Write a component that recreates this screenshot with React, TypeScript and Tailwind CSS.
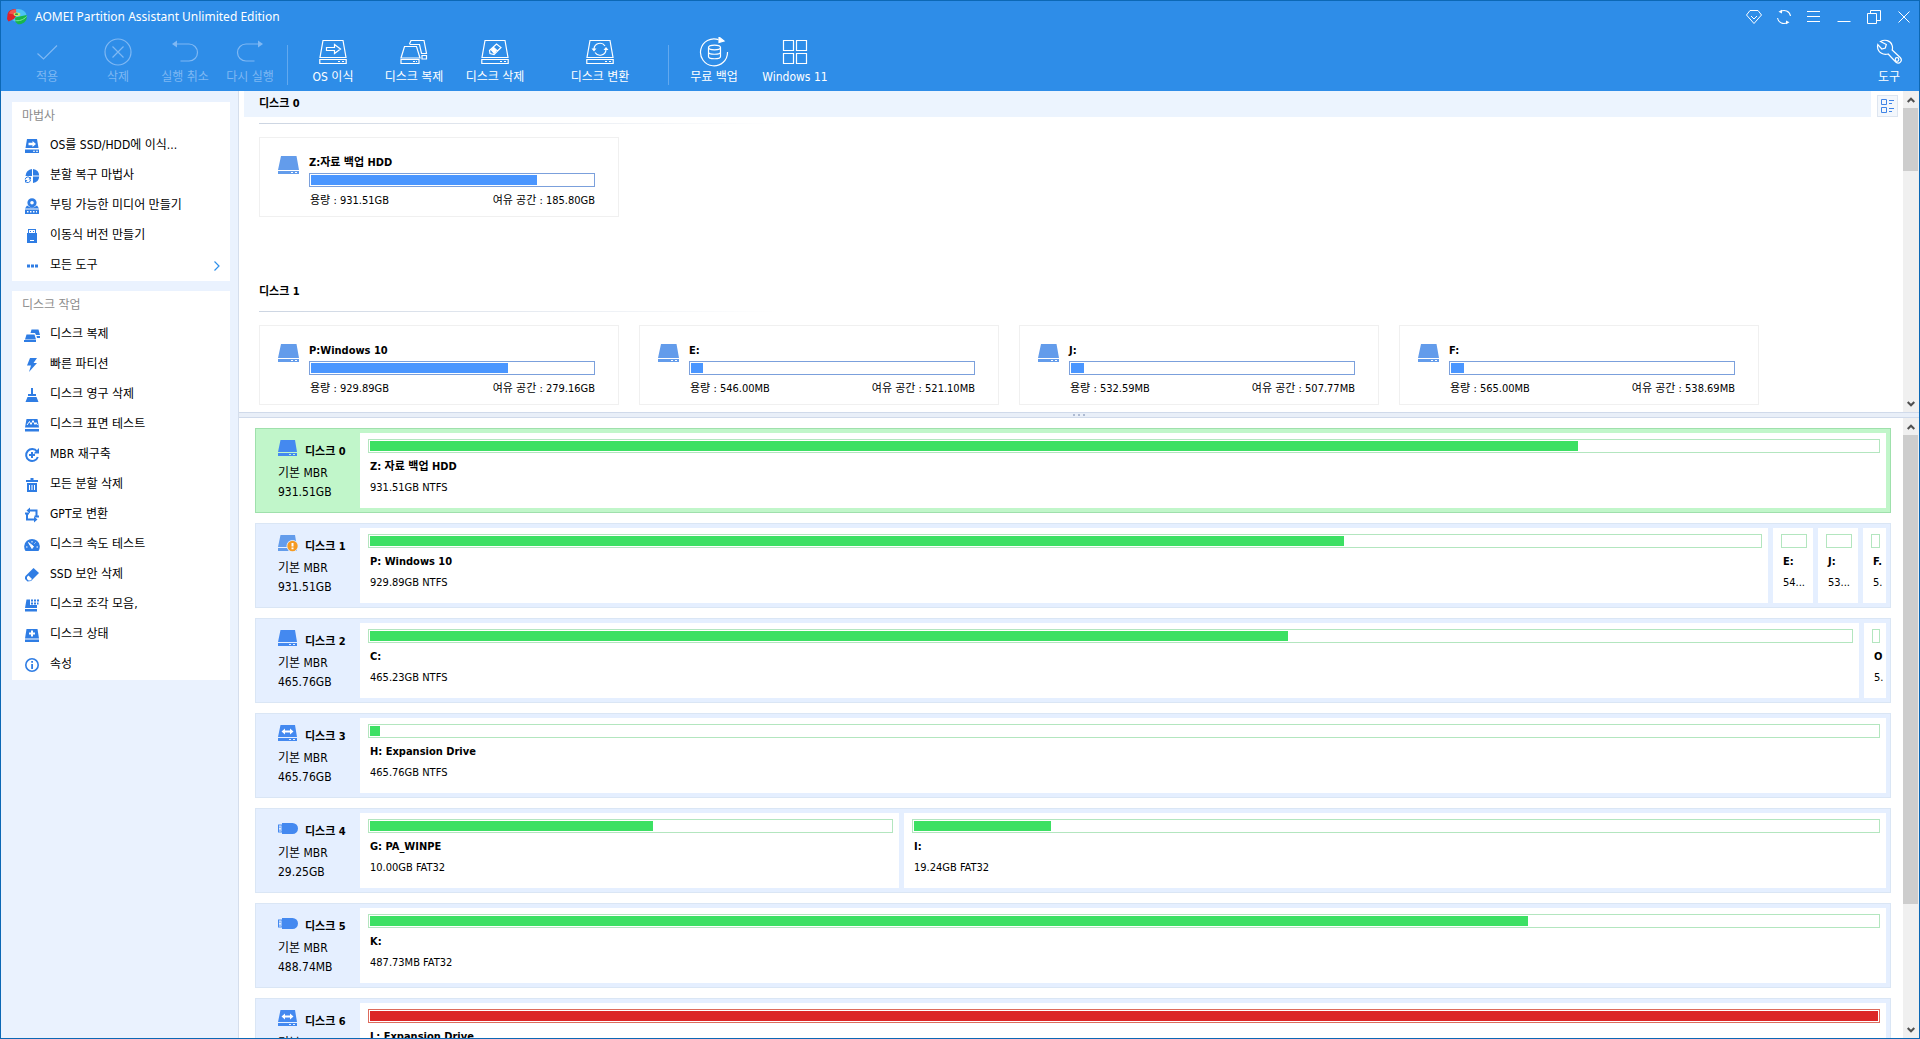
import { ReactNode } from "react"

type Volume = { name: string; capacity: string; free: string; used: number }
type Partition = { name: string; info: string; used: number; size: string; full?: boolean }
type Disk = { id: number; icon: ReactNode; capacity: string; partitions: Partition[]; active?: boolean }

/* ---------- icons ---------- */

const LogoIcon = () => (
    <svg width="20" height="17" viewBox="0 0 20 17">
        <ellipse cx="11" cy="7.500" rx="8.500" ry="6.500" fill="#4cc3f5" />
        <path d="M9 1.200C4 1 1 3 .6 6.200L0 11l1.500 2.500L7 11l2-3Z" fill="#e02228" />
        <path d="M9 1.200C5 1.400 2.500 3 2 5.500L9.500 7Z" fill="#f4574c" />
        <path d="M8 9.500 19.600 7v3.500C19 14 15.500 16.400 11 16.300L8.500 14Z" fill="#18b64c" />
        <path d="M8.500 12.500c3 .8 8-.5 11-4" fill="none" stroke="#7be89a" strokeWidth="1" />
        <ellipse cx="10" cy="6.300" rx="3.400" ry="1.900" fill="#c9e86a" />
        <ellipse cx="9.500" cy="6.200" rx="1.600" ry=".9" fill="#37974a" />
    </svg>
)

const Stroke = ({ children, size = 28 }: { children: ReactNode; size?: number }) => (
    <svg width={size} height="28" viewBox={`0 0 ${size} 28`} fill="none" stroke="currentColor" strokeWidth="1.200">
        {children}
    </svg>
)

const CheckIcon = () => <Stroke><path d="M4.500 15.500l6 5.500L24 7.500" /></Stroke>

const CancelIcon = () => (
    <Stroke>
        <circle cx="14" cy="14" r="13" />
        <path d="M8.500 8.500l11 11M19.500 8.500l-11 11" />
    </Stroke>
)

const UndoIcon = () => (
    <Stroke>
        <path d="M5 6h13a8.500 8.500 0 0 1 0 17H9.500" />
        <path d="M1 6l5-3.500v7Z" fill="currentColor" stroke="none" />
    </Stroke>
)

const RedoIcon = () => (
    <Stroke>
        <path d="M23 6H10a8.500 8.500 0 0 0 0 17h8.500" />
        <path d="M27 6l-5-3.500v7Z" fill="currentColor" stroke="none" />
    </Stroke>
)

const OutlineDisk = ({ children }: { children?: ReactNode }) => (
    <Stroke>
        <path d="M4 2.500h20l3 17H1ZM.8 21.500h26.400v4H.8ZM19 23.500h2M23 23.500h2" />
        {children}
    </Stroke>
)

const MigrateIcon = () => (
    <OutlineDisk>
        <path d="M7.500 9.500h8V6.500l6 4.500-6 4.500v-3h-8Z" />
    </OutlineDisk>
)

const CloneIcon = () => (
    <Stroke>
        <path d="M4.500 8.500h12l3.500 11.500H1ZM1 21.500h18v4H1ZM13 23.500h2M16 23.500h1" />
        <path d="M9.500 6l1.500-3.500h13l2.500 13h-5l-2-9H9.500M22 17.500h4.500v3.500H22Z" />
    </Stroke>
)

const WipeIcon = () => (
    <OutlineDisk>
        <path d="M8.500 12.500l7-6.500 4.500 3.500-7 7-4-1ZM12 9l4.500 4" />
        <path d="M10.500 12l2-2 2.500 3-2 2Z" fill="currentColor" />
    </OutlineDisk>
)

const ConvertIcon = () => (
    <OutlineDisk>
        <path d="M8 11a6 6 0 0 1 11-3M20 11.500a6 6 0 0 1-11 3" />
        <path d="M5.500 10.500h5l-2.500 3ZM17.500 12h5l-2.500-3Z" fill="currentColor" stroke="none" />
    </OutlineDisk>
)

const BackupIcon = () => (
    <svg width="30" height="30" viewBox="0 0 30 30" fill="none" stroke="currentColor" strokeWidth="1.200">
        <path d="M19.500 2.600A13.500 13.500 0 1 0 28.500 15" />
        <path d="M20 0l5 4-5 1.500Z" fill="currentColor" />
        <ellipse cx="15.500" cy="10.500" rx="6" ry="2.300" />
        <path d="M9.500 10.500v9c0 3 12 3 12 0v-9M9.500 15c0 3 12 3 12 0" />
    </svg>
)

const WindowsIcon = () => (
    <Stroke>
        <path d="M2.500 2.500h10v10h-10ZM15.500 2.500h10v10h-10ZM2.500 15.500h10v10h-10ZM15.500 15.500h10v10h-10Z" />
    </Stroke>
)

const WrenchIcon = () => (
    <Stroke>
        <path d="M5.500 3.500C10 1 15.500 2.500 17 7c.8 2 .6 3.500.2 5l8 7.500c3 3.500-1 7.500-4.500 4.500l-7.500-8c-5 1.500-10.500-1.500-10.700-7.500l.3-2 4 4.500 3.500-1 1-3.500Z" />
        <circle cx="22" cy="21.500" r="1.800" />
    </Stroke>
)

const GemIcon = () => (
    <svg width="16" height="14" viewBox="0 0 16 14" fill="none" stroke="currentColor">
        <path d="M4 .5h8L15.500 5 8 13.500.5 5ZM5 6l3 3 3-3" />
    </svg>
)

const SyncIcon = () => (
    <svg width="16" height="16" viewBox="0 0 16 16" fill="none" stroke="currentColor" strokeWidth="1.100">
        <path d="M4.500 2.500C8.500.3 13.500 2 14.500 7M11.500 13.500C7.500 15.700 2.500 14 1.500 9" />
        <path d="M2.500 2.800 6 .8v3.800ZM13.500 13.200 10 15.200v-3.800Z" fill="currentColor" stroke="none" />
    </svg>
)

const MenuIcon = () => (
    <svg width="14" height="12" viewBox="0 0 14 12" stroke="currentColor">
        <path d="M0 .5h13M0 5.500h13M0 10.500h13" />
    </svg>
)

const MinimizeIcon = () => (
    <svg width="14" height="12" viewBox="0 0 14 12" stroke="currentColor">
        <path d="M.5 10.500h13" />
    </svg>
)

const RestoreIcon = () => (
    <svg width="14" height="14" viewBox="0 0 14 14" fill="none" stroke="currentColor">
        <path d="M.5 3.500h9v10h-9ZM3.500 3V.5h10v10H10" />
    </svg>
)

const CloseIcon = () => (
    <svg width="12" height="12" viewBox="0 0 12 12" stroke="currentColor">
        <path d="M.5.5l11 11M11.500.5l-11 11" />
    </svg>
)

const Solid = ({ children }: { children: ReactNode }) => (
    <svg width="16" height="16" viewBox="0 0 16 16" fill="#2f7de4">{children}</svg>
)

const solidDisk = "M3 1h10l1.500 9h-13ZM1 11.500h14V15H1ZM9 12.700v1h2v-1ZM12 12.700v1h2v-1Z"

const wizards = [
    {
        label: "OS를 SSD/HDD에 이식...",
        icon: <Solid><path fillRule="evenodd" d={solidDisk} /><path d="M4.500 4.800h4V3l3.500 3-3.500 3V7.200h-4Z" fill="#fff" /></Solid>,
    },
    {
        label: "분할 복구 마법사",
        icon: (
            <Solid>
                <path d="M8 1v7H1.500A7 7 0 0 1 8 1ZM9 1a7 7 0 0 1 6.200 6.500H9ZM15.200 8.500A7 7 0 0 1 9 15V8.500Z" />
                <path d="M1.200 11.500a2.800 2.800 0 0 1 5-1.500M6.500 12a2.800 2.800 0 0 1-5 1.500" fill="none" stroke="#2f7de4" />
                <path d="M7 8.500v3H4.500ZM1 15v-3h2.500Z" />
            </Solid>
        ),
    },
    {
        label: "부팅 가능한 미디어 만들기",
        icon: (
            <Solid>
                <circle cx="8" cy="4.800" r="3.200" fill="none" stroke="#2f7de4" strokeWidth="2.800" />
                <path fillRule="evenodd" d="M3 7.500 1 10.500h14l-2-3-3 1.800H6ZM1 11.500h14V16H1ZM3 13v1.500h1.500V13ZM6 13v1.500h1.500V13ZM9 13v1.500h1.500V13ZM12 13v1.500h1V13Z" />
            </Solid>
        ),
    },
    {
        label: "이동식 버전 만들기",
        icon: <Solid><path fillRule="evenodd" d="M4 1h8v4h1v10H3V5h1ZM5 2v3h6V2ZM6 3h1v1H6ZM9 3h1v1H9ZM6 12v1h4v-1Z" /></Solid>,
    },
    { label: "모든 도구", more: true, icon: <Solid><path d="M3 6.500h3v3H3ZM7 6.500h3v3H7ZM11 6.500h3v3h-3Z" /></Solid> },
]

const operations = [
    {
        label: "디스크 복제",
        icon: <Solid><path d="M2.500 7.500h8l1.500 5H1ZM0 13h12v2H0ZM6.500 6l1-3.500h7L16 8h-4l-1-2ZM12.500 9H16v2h-3Z" /></Solid>,
    },
    { label: "빠른 파티션", icon: <Solid><path d="M6 1h7l-3.500 5H13L5 15l2-6.500H3Z" /></Solid> },
    {
        label: "디스크 영구 삭제",
        icon: <Solid><path d="M7 1h2v6h3v2H4V7h3ZM3.500 10h9l2 5h-13Z" /></Solid>,
    },
    {
        label: "디스크 표면 테스트",
        icon: (
            <Solid>
                <path d="M2.500 2h11l1.500 8.500H1ZM1 12h14v2.500H1Z" />
                <path d="M3 8l2.500-3.500L7 7.500l2-4 2 4 1-2 1.500 2.500" fill="none" stroke="#fff" />
            </Solid>
        ),
    },
    {
        label: "MBR 재구축",
        icon: (
            <Solid>
                <path d="M13 4.500A6 6 0 1 0 13.800 10" fill="none" stroke="#2f7de4" strokeWidth="2" />
                <path d="M15 1v5.500h-5.500ZM7 5h2v2h2v2H9v2H7V9H5V7h2Z" />
            </Solid>
        ),
    },
    {
        label: "모든 분할 삭제",
        icon: <Solid><path fillRule="evenodd" d="M2 3h4.500V1h3v2H14v2H2ZM3 6h10v9H3ZM5 8v5h1V8ZM7.500 8v5h1V8ZM10 8v5h1V8Z" /></Solid>,
    },
    {
        label: "GPT로 변환",
        icon: (
            <Solid>
                <path d="M3 6.500v6h7M5.500 3.500h7v6" fill="none" stroke="#2f7de4" strokeWidth="2" />
                <path d="M6 .5v6l-3.500-3ZM10 9.500v6l3.500-3Z" />
                <path d="M1 5.500h4v2H1ZM10.500 8.500h4.500v2h-4.500Z" />
            </Solid>
        ),
    },
    {
        label: "디스크 속도 테스트",
        icon: (
            <Solid>
                <path d="M1.500 14A7.800 7.800 0 1 1 14.500 14Z" />
                <path d="M4.500 5.500l5 4-1.500 2Z" fill="#fff" stroke="#fff" />
                <path d="M2 10h1.500M12.500 10H14M8 4v1.500M11.500 5.500l-1 1" stroke="#fff" />
            </Solid>
        ),
    },
    {
        label: "SSD 보안 삭제",
        icon: (
            <Solid>
                <path d="M9.500 1 15 6 7 14l-3.500.5L1 12V9.500Z" />
                <path d="M3 10l1.500-1.500L8 12l-1.500 1.500H4.500L3 12Z" fill="#fff" />
            </Solid>
        ),
    },
    {
        label: "디스코 조각 모음,",
        icon: <Solid><path d="M2.500 2.500H6V8h7v3H1ZM1 12h12v2.500H1ZM7 2.500h2v2H7ZM10 2.500h2v2h-2ZM13 2.500h2v2h-2ZM7 5.500h2v2H7ZM10 5.500h2v2h-2ZM13 5.500h1.500v2H13Z" /></Solid>,
    },
    {
        label: "디스크 상태",
        icon: <Solid><path fillRule="evenodd" d="M2.500 2h11l1.500 9.500H1ZM7 3.500v2H5v2h2v2h2v-2h2v-2H9v-2ZM1 12.500h14V15H1Z" /></Solid>,
    },
    {
        label: "속성",
        icon: (
            <Solid>
                <circle cx="8" cy="8" r="6.200" fill="none" stroke="#2f7de4" strokeWidth="1.600" />
                <path d="M7.200 4h1.800v1.800H7.200ZM7.200 7h1.800v5H7.200Z" />
            </Solid>
        ),
    },
]

const VolumeIcon = () => (
    <svg width="21" height="18" viewBox="0 0 21 18" fill="#639ceb">
        <path fillRule="evenodd" d="M3 0h15.500L21 14H0ZM0 15h21v3H0ZM13 16v1h2v-1ZM17 16v1h2v-1Z" />
    </svg>
)

const DiskIcon = ({ children, fill = "#4489f0" }: { children?: ReactNode; fill?: string }) => (
    <svg width="20" height="17" viewBox="0 0 20 17" fill={fill}>
        <path fillRule="evenodd" d="M2.500 0h14.500L19 12H0ZM0 13h19v3H0ZM11 14v1h2v-1ZM15 14v1h2v-1Z" />
        {children}
    </svg>
)

const WarningDiskIcon = () => (
    <DiskIcon fill="#639ceb">
        <circle cx="14.500" cy="11" r="6" fill="#e5efff" />
        <circle cx="14.500" cy="11" r="5.200" fill="#f59b23" />
        <path d="M13.500 8h2v3.500h-2ZM13.500 12.500h2v1.800h-2Z" fill="#fff" />
    </DiskIcon>
)

const ExternalDiskIcon = () => (
    <DiskIcon>
        <path d="M3.500 6.500 7 3.500v2h5v-2l3.500 3-3.500 3v-2H7v2Z" fill="#fff" />
    </DiskIcon>
)

const UsbIcon = () => (
    <svg width="20" height="17" viewBox="0 0 20 17" fill="#4489f0">
        <path fillRule="evenodd" d="M4 3h10.500a5.500 5.500 0 0 1 0 11H4v-1.500H0V4.500h4ZM1 5.500v6h2.500v-6ZM1.500 6.500h1V8h-1ZM1.500 9.500h1V11h-1Z" />
    </svg>
)

/* ---------- data ---------- */

const volumeGroups: { disk: number; volumes: Volume[] }[] = [
    { disk: 0, volumes: [{ name: "Z:자료 백업 HDD", capacity: "931.51GB", free: "185.80GB", used: 80 }] },
    {
        disk: 1,
        volumes: [
            { name: "P:Windows 10", capacity: "929.89GB", free: "279.16GB", used: 70 },
            { name: "E:", capacity: "546.00MB", free: "521.10MB", used: 4.3 },
            { name: "J:", capacity: "532.59MB", free: "507.77MB", used: 4.6 },
            { name: "F:", capacity: "565.00MB", free: "538.69MB", used: 4.6 },
        ],
    },
]

const disks: Disk[] = [
    {
        id: 0, icon: <DiskIcon />, capacity: "931.51GB", active: true,
        partitions: [{ name: "Z: 자료 백업 HDD", info: "931.51GB NTFS", used: 80.1, size: "flex-1" }],
    },
    {
        id: 1, icon: <WarningDiskIcon />, capacity: "931.51GB",
        partitions: [
            { name: "P: Windows 10", info: "929.89GB NTFS", used: 70.1, size: "flex-1" },
            { name: "E:", info: "54...", used: 0, size: "w-10" },
            { name: "J:", info: "53...", used: 0, size: "w-10" },
            { name: "F.", info: "5.", used: 0, size: "w-[23px]" },
        ],
    },
    {
        id: 2, icon: <DiskIcon />, capacity: "465.76GB",
        partitions: [
            { name: "C:", info: "465.23GB NTFS", used: 62, size: "flex-1" },
            { name: "O", info: "5.", used: 0, size: "w-[22px]" },
        ],
    },
    {
        id: 3, icon: <ExternalDiskIcon />, capacity: "465.76GB",
        partitions: [{ name: "H: Expansion Drive", info: "465.76GB NTFS", used: 0.66, size: "flex-1" }],
    },
    {
        id: 4, icon: <UsbIcon />, capacity: "29.25GB",
        partitions: [
            { name: "G: PA_WINPE", info: "10.00GB FAT32", used: 54.3, size: "flex-[525]" },
            { name: "I:", info: "19.24GB FAT32", used: 14.2, size: "flex-[968]" },
        ],
    },
    {
        id: 5, icon: <UsbIcon />, capacity: "488.74MB",
        partitions: [{ name: "K:", info: "487.73MB FAT32", used: 76.8, size: "flex-1" }],
    },
    {
        id: 6, icon: <ExternalDiskIcon />, capacity: "465.76GB",
        partitions: [{ name: "L: Expansion Drive", info: "465.76GB NTFS", used: 100, size: "flex-1", full: true }],
    },
]

/* ---------- parts ---------- */

const ToolButton = ({ icon, label, width, disabled }: { icon: ReactNode; label: string; width: string; disabled?: boolean }) => (
    <button
        disabled={disabled}
        className={`${width} flex flex-col items-center gap-0.5 text-[12px] leading-4 whitespace-nowrap ${disabled ? "text-[#7fb8f3]" : "text-white"}`}
    >
        <span className="flex h-[30px] items-center">{icon}</span>
        {label}
    </button>
)

const Divider = () => <div className="mx-1 mt-2 h-10 w-px bg-[#62a9ef]" />

const SideCard = ({ title, items }: { title: string; items: { label: string; icon: ReactNode; more?: boolean }[] }) => (
    <section className="bg-white">
        <h2 className="h-[29px] pl-2.5 leading-[29px] text-[#8c8c8c]">{title}</h2>
        <ul>
            {items.map((item) => (
                <li key={item.label}>
                    <button className="flex h-[30px] w-full items-center gap-2.5 pr-2.5 pl-3 text-left whitespace-nowrap">
                        {item.icon}
                        <span className="flex-1 pb-0.5">{item.label}</span>
                        {item.more && (
                            <svg width="6" height="10" viewBox="0 0 6 10" fill="none" stroke="#2f90ea" strokeWidth="1.200">
                                <path d="M.5.5 5 5 .5 9.500" />
                            </svg>
                        )}
                    </button>
                </li>
            ))}
        </ul>
    </section>
)

const ScrollBar = ({ thumb }: { thumb: string }) => (
    <div className="flex w-4 shrink-0 flex-col bg-[#f0f0f0]">
        <button aria-label="위로" className="flex h-[17px] shrink-0 items-center justify-center">
            <svg width="8" height="6" viewBox="0 0 8 6" fill="none" stroke="#505050" strokeWidth="2">
                <path d="M.7 5 4 1.700 7.300 5" />
            </svg>
        </button>
        <div className="min-h-0 flex-1">
            <div className={`${thumb} w-[15px] bg-[#cdcdcd]`} />
        </div>
        <button aria-label="아래로" className="flex h-[17px] shrink-0 items-center justify-center">
            <svg width="8" height="6" viewBox="0 0 8 6" fill="none" stroke="#505050" strokeWidth="2">
                <path d="M.7 1 4 4.300 7.300 1" />
            </svg>
        </button>
    </div>
)

const VolumeCard = ({ volume }: { volume: Volume }) => (
    <article className="flex h-20 w-[360px] gap-2.5 border border-[#f0f0f0] pt-[15px] pr-[23px] pl-[18px]">
        <div className="pt-[3px]"><VolumeIcon /></div>
        <div className="flex-1">
            <h3 className="h-5 text-[11px] leading-5 font-bold">{volume.name}</h3>
            <div className="h-3.5 border border-[#7ba0dc] p-px">
                <div className="h-full bg-[#4a96ff]" style={{ width: `${volume.used}%` }} />
            </div>
            <div className="flex justify-between pt-1 pl-px text-[11px] leading-5">
                <span>용량 : {volume.capacity}</span>
                <span>여유 공간 : {volume.free}</span>
            </div>
        </div>
    </article>
)

const PartitionBox = ({ partition }: { partition: Partition }) => (
    <div className={`${partition.size} bg-white pt-1.5 pr-1.5 pl-2 whitespace-nowrap`}>
        <div className={`h-3.5 border p-px ${partition.full ? "border-[#dd6b5c]" : "border-[#b3e6bf]"}`}>
            <div
                className={`h-full ${partition.full ? "bg-[#dc2627]" : "bg-[#3ce063]"}`}
                style={{ width: `${partition.used}%` }}
            />
        </div>
        <h3 className="mt-1 pl-0.5 text-[11px] leading-5 font-bold">{partition.name}</h3>
        <p className="mt-[3px] pl-0.5 text-[11px] leading-4">{partition.info}</p>
    </div>
)

const DiskRow = ({ disk }: { disk: Disk }) => (
    <section className={`flex h-[85px] shrink-0 border p-1 ${disk.active ? "border-[#9fe0ac] bg-[#c1f6ca]" : "border-[#dae6f5] bg-[#e5efff]"}`}>
        <header className="w-[100px] shrink-0 pt-[7px] pl-[18px]">
            <div className="flex h-6 gap-[7px]">
                {disk.icon}
                <h2 className="pt-0.5 text-[11px] leading-5 font-bold whitespace-nowrap">디스크 {disk.id}</h2>
            </div>
            <p className="text-[12px] leading-[19px]">기본 MBR</p>
            <p className="text-[12px] leading-[19px]">{disk.capacity}</p>
        </header>
        <div className="flex min-w-0 flex-1 gap-[5px]">
            {disk.partitions.map((partition) => (
                <PartitionBox key={partition.name} partition={partition} />
            ))}
        </div>
    </section>
)

const windowButtons = [
    { label: "업그레이드", icon: <GemIcon /> },
    { label: "새로 고침", icon: <SyncIcon /> },
    { label: "메뉴", icon: <MenuIcon /> },
    { label: "최소화", icon: <MinimizeIcon /> },
    { label: "이전 크기로", icon: <RestoreIcon /> },
    { label: "닫기", icon: <CloseIcon /> },
]

export default function App() {
    return (
        <div className="flex h-screen flex-col overflow-hidden border border-[#0c68b5] bg-white font-['DejaVu_Sans_Condensed','Noto_Sans_CJK_KR',sans-serif] text-[12px] text-black">
            {/* TITLE BAR + TOOLBAR */}
            <header className="h-[90px] shrink-0 bg-[#2e8de8] text-white">
                <div className="flex h-[31px] items-center justify-between pl-1.5">
                    <div className="flex items-center gap-2">
                        <LogoIcon />
                        <h1 className="font-['Noto_Sans',sans-serif] text-[12px]">AOMEI Partition Assistant Unlimited Edition</h1>
                    </div>
                    <div className="flex h-[29px]">
                        {windowButtons.map((button) => (
                            <button key={button.label} aria-label={button.label} className="flex w-[30px] items-center justify-center">
                                {button.icon}
                            </button>
                        ))}
                    </div>
                </div>
                <div className="flex pt-[5px] pl-2.5">
                    <ToolButton icon={<CheckIcon />} label="적용" width="w-[72px]" disabled />
                    <ToolButton icon={<CancelIcon />} label="삭제" width="w-[70px]" disabled />
                    <ToolButton icon={<UndoIcon />} label="실행 취소" width="w-16" disabled />
                    <ToolButton icon={<RedoIcon />} label="다시 실행" width="w-[66px]" disabled />
                    <Divider />
                    <ToolButton icon={<MigrateIcon />} label="OS 이식" width="w-[82px]" />
                    <ToolButton icon={<CloneIcon />} label="디스크 복제" width="w-20" />
                    <ToolButton icon={<WipeIcon />} label="디스크 삭제" width="w-[82px]" />
                    <ToolButton icon={<ConvertIcon />} label="디스크 변환" width="w-32" />
                    <Divider />
                    <ToolButton icon={<BackupIcon />} label="무료 백업" width="w-[82px]" />
                    <ToolButton icon={<WindowsIcon />} label="Windows 11" width="w-20" />
                    <div className="flex-1" />
                    <ToolButton icon={<WrenchIcon />} label="도구" width="w-[60px]" />
                </div>
            </header>

            <div className="flex min-h-0 flex-1">
                {/* SIDEBAR */}
                <aside className="flex w-[238px] shrink-0 flex-col gap-2.5 border-r border-[#d5deec] bg-[#eaf2fe] pt-[11px] pr-2 pl-[11px]">
                    <SideCard title="마법사" items={wizards} />
                    <SideCard title="디스크 작업" items={operations} />
                </aside>

                <main className="flex min-w-0 flex-1 flex-col">
                    {/* VOLUMES */}
                    <div className="flex h-[321px] shrink-0">
                        <div className="min-w-0 flex-1 overflow-hidden pl-[5px]">
                            {volumeGroups.map((group) => (
                                <section key={group.disk} className="h-[188px]">
                                    <h2 className={`h-[26px] pl-[15px] text-[11px] leading-[26px] font-bold ${group.disk === 0 ? "bg-[#ecf4fe]" : ""}`}>
                                        디스크 {group.disk}
                                    </h2>
                                    <div className="mt-1.5 ml-[15px] h-px w-[520px] bg-linear-to-r from-[#ccd5e2] to-white" />
                                    <div className="mt-[13px] flex gap-5 pl-[15px]">
                                        {group.volumes.map((volume) => (
                                            <VolumeCard key={volume.name} volume={volume} />
                                        ))}
                                    </div>
                                </section>
                            ))}
                        </div>
                        <div className="w-8 pt-1 pl-1.5">
                            <button aria-label="보기" className="flex h-[22px] w-[21px] items-center justify-center border border-[#dde5f0] bg-[#f3f7fc]">
                                <svg width="13" height="14" viewBox="0 0 13 14" fill="none" stroke="#3f84e6">
                                    <path d="M.5.5h5v5h-5ZM.5 8.500h5v5h-5ZM8 1.500h5M8 4.500h3M8 9.500h5M8 12.500h3" />
                                </svg>
                            </button>
                        </div>
                        <ScrollBar thumb="h-[63px]" />
                    </div>

                    {/* SPLITTER */}
                    <div className="flex h-1.5 shrink-0 items-center justify-center gap-[3px] border-y border-[#d0daea] bg-[#e9eff8]">
                        <span className="size-0.5 bg-[#aebbd2]" />
                        <span className="size-0.5 bg-[#aebbd2]" />
                        <span className="size-0.5 bg-[#aebbd2]" />
                    </div>

                    {/* DISK MAP */}
                    <div className="flex min-h-0 flex-1">
                        <div className="flex min-w-0 flex-1 flex-col gap-2.5 overflow-hidden pt-2.5 pr-3 pl-4">
                            {disks.map((disk) => (
                                <DiskRow key={disk.id} disk={disk} />
                            ))}
                        </div>
                        <ScrollBar thumb="h-[80%]" />
                    </div>
                </main>
            </div>
        </div>
    )
}
